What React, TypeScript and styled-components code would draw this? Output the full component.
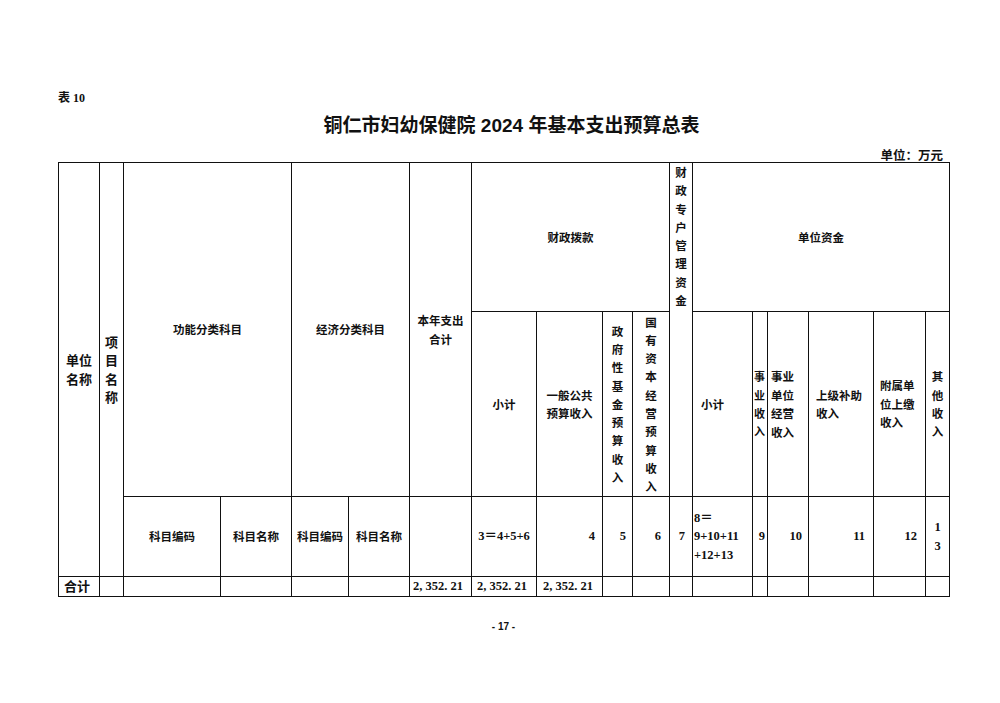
import styled, { createGlobalStyle } from 'styled-components';

const GlobalStyle = createGlobalStyle`
  html, body {
    margin: 0;
    padding: 0;
    background: #fff;
  }
`;

const Page = styled.div`
  width: 1000px;
  height: 703px;
  box-sizing: border-box;
  padding: 90px 0 0 58px;
  color: #111;
  font-family: 'Noto Sans CJK SC', sans-serif;
`;

const SheetLabel = styled.div`
  font-size: 12px;
  line-height: 16px;
  font-weight: 700;
  font-family: 'Liberation Serif', 'Noto Sans CJK SC', serif;
`;

const Title = styled.h1`
  margin: 8px 0 0;
  width: 891px;
  padding-left: 16px;
  box-sizing: border-box;
  text-align: center;
  font-size: 19px;
  line-height: 24px;
  font-weight: 700;
  font-family: 'Liberation Sans', 'Noto Sans CJK SC', sans-serif;
`;

const Unit = styled.div`
  width: 885px;
  margin-top: 10px;
  text-align: right;
  font-size: 12.5px;
  line-height: 14px;
  font-weight: 700;
`;

const Sheet = styled.table`
  width: 891px;
  table-layout: fixed;
  border-collapse: collapse;
  font-size: 11.5px;
  font-weight: 700;
`;

const Row = styled.tr<{ $h: number }>`
  height: ${(p) => p.$h}px;
`;

type Align = 'left' | 'center' | 'right';

const Cell = styled.td<{ $align?: Align; $top?: boolean; $serif?: boolean; $pad?: number; $size?: number }>`
  border: 1px solid #111;
  padding: 0 ${(p) => p.$pad ?? 2}px;
  text-align: ${(p) => p.$align ?? 'center'};
  vertical-align: ${(p) => (p.$top ? 'top' : 'middle')};
  line-height: 18.5px;
  font-size: ${(p) => p.$size ?? 11.5}px;
  font-family: ${(p) =>
    p.$serif ? "'Liberation Serif', 'Noto Sans CJK SC', serif" : "'Noto Sans CJK SC', sans-serif"};
  white-space: nowrap;
  overflow: hidden;
`;

const Stack = styled.div<{ $start?: boolean }>`
  display: flex;
  flex-direction: column;
  align-items: ${(p) => (p.$start ? 'flex-start' : 'center')};
  line-height: 18.3px;
  white-space: nowrap;
`;

const Lines = styled.div<{ $left?: boolean }>`
  display: inline-block;
  text-align: ${(p) => (p.$left ? 'left' : 'center')};
  white-space: nowrap;
`;

const PageNo = styled.div`
  width: 891px;
  margin-top: 24px;
  text-align: center;
  font-size: 10px;
  font-weight: 700;
  font-family: 'Liberation Sans', sans-serif;
`;

const widths = [41, 24, 97, 71, 57, 61, 62, 65, 66, 30, 37, 23, 60, 15, 41, 65, 52, 24];

const Vertical = ({ text, start }: { text: string; start?: boolean }) => (
  <Stack $start={start}>
    {text.split('').map((c, i) => (
      <span key={i}>{c}</span>
    ))}
  </Stack>
);

const Multi = ({ lines, left }: { lines: string[]; left?: boolean }) => (
  <Lines $left={left}>
    {lines.map((l, i) => (
      <div key={i}>{l}</div>
    ))}
  </Lines>
);

const BudgetSummary = () => {
  return (
    <Page>
      <GlobalStyle />
      <SheetLabel>表 10</SheetLabel>
      <Title>铜仁市妇幼保健院 2024 年基本支出预算总表</Title>
      <Unit>单位：万元</Unit>
      <Sheet>
        <colgroup>
          {widths.map((w, i) => (
            <col key={i} style={{ width: w }} />
          ))}
        </colgroup>
        <tbody>
          <Row $h={149}>
            <Cell rowSpan={3} $size={13}>
              <Multi lines={['单位', '名称']} />
            </Cell>
            <Cell rowSpan={3} $size={13} $pad={0}>
              <Vertical text="项目名称" />
            </Cell>
            <Cell colSpan={2} rowSpan={2}>功能分类科目</Cell>
            <Cell colSpan={2} rowSpan={2}>经济分类科目</Cell>
            <Cell rowSpan={2}>
              <Multi lines={['本年支出', '合计']} />
            </Cell>
            <Cell colSpan={4}>财政拨款</Cell>
            <Cell rowSpan={2} $top $pad={0}>
              <Vertical text="财政专户管理资金" />
            </Cell>
            <Cell colSpan={6}>单位资金</Cell>
          </Row>
          <Row $h={185}>
            <Cell>小计</Cell>
            <Cell>
              <Multi lines={['一般公共', '预算收入']} />
            </Cell>
            <Cell $pad={0}>
              <Vertical text="政府性基金预算收入" />
            </Cell>
            <Cell $pad={0}>
              <Vertical text="国有资本经营预算收入" />
            </Cell>
            <Cell $align="left" $pad={8}>小计</Cell>
            <Cell $align="left" $pad={1} $size={11}>
              <Vertical text="事业收入" start />
            </Cell>
            <Cell $align="left" $pad={3}>
              <Multi left lines={['事业', '单位', '经营', '收入']} />
            </Cell>
            <Cell $align="left" $pad={7}>
              <Multi left lines={['上级补助', '收入']} />
            </Cell>
            <Cell $align="left" $pad={6}>
              <Multi left lines={['附属单', '位上缴', '收入']} />
            </Cell>
            <Cell $pad={0}>
              <Vertical text="其他收入" />
            </Cell>
          </Row>
          <Row $h={80}>
            <Cell>科目编码</Cell>
            <Cell>科目名称</Cell>
            <Cell>科目编码</Cell>
            <Cell>科目名称</Cell>
            <Cell />
            <Cell $serif $size={12.5} $pad={0}>3＝4+5+6</Cell>
            <Cell $serif $size={12.5} $align="right" $pad={7}>4</Cell>
            <Cell $serif $size={12.5} $align="right" $pad={6}>5</Cell>
            <Cell $serif $size={12.5} $align="right" $pad={8}>6</Cell>
            <Cell $serif $size={12.5} $align="right" $pad={7}>7</Cell>
            <Cell $serif $size={12.5} $align="left" $pad={1}>
              <Multi left lines={['8＝', '9+10+11', '+12+13']} />
            </Cell>
            <Cell $serif $size={12.5} $align="right" $pad={2}>9</Cell>
            <Cell $serif $size={12.5} $align="right" $pad={6}>10</Cell>
            <Cell $serif $size={12.5} $align="right" $pad={8}>11</Cell>
            <Cell $serif $size={12.5} $align="right" $pad={8}>12</Cell>
            <Cell $serif $size={12.5} $pad={0}>
              <Vertical text="13" />
            </Cell>
          </Row>
          <Row $h={19}>
            <Cell $size={13} $align="left" $pad={5}>合计</Cell>
            <Cell />
            <Cell />
            <Cell />
            <Cell />
            <Cell />
            <Cell $serif $size={12.5} $align="left" $pad={3}>2, 352. 21</Cell>
            <Cell $serif $size={12.5} $align="left" $pad={5}>2, 352. 21</Cell>
            <Cell $serif $size={12.5} $align="left" $pad={6}>2, 352. 21</Cell>
            <Cell />
            <Cell />
            <Cell />
            <Cell />
            <Cell />
            <Cell />
            <Cell />
            <Cell />
            <Cell />
          </Row>
        </tbody>
      </Sheet>
      <PageNo>- 17 -</PageNo>
    </Page>
  );
};

export default BudgetSummary;
